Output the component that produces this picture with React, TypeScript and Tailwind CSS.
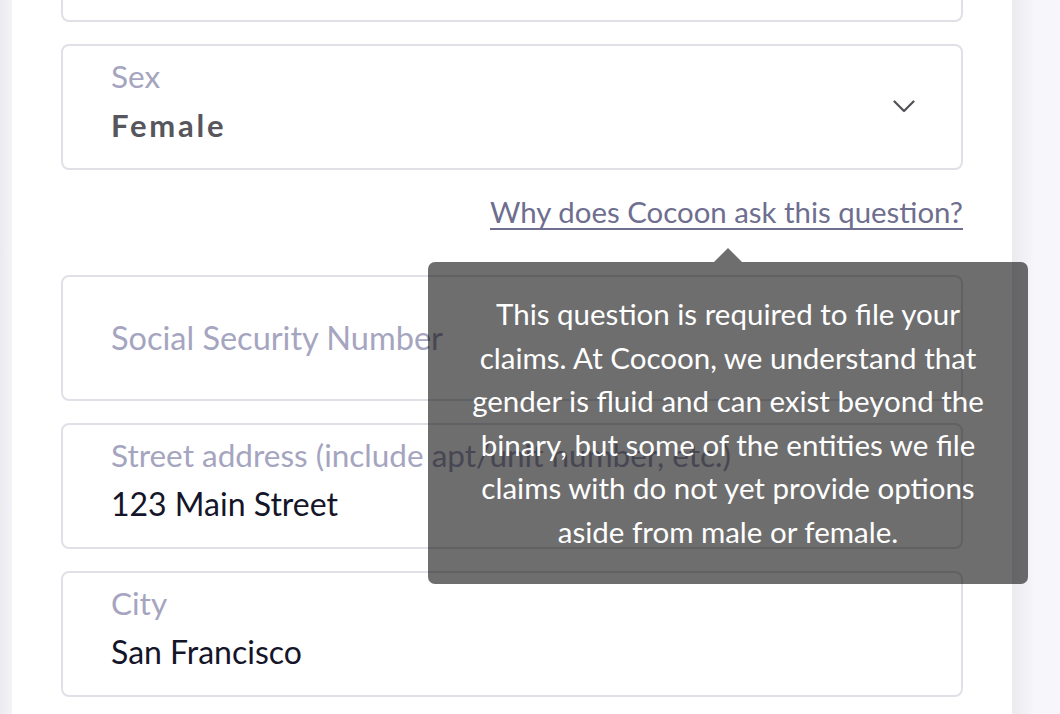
import React from 'react';

const font = { fontFamily: 'Lato, "Noto Sans", sans-serif' };

interface FieldProps {
  label?: string;
  value?: string;
  placeholder?: string;
  select?: boolean;
  className?: string;
}

const Field: React.FC<FieldProps> = ({ label, value, placeholder, select, className = '' }) => {
  if (placeholder !== undefined) {
    return (
      <div className={`h-[126px] rounded-[8px] border-2 border-[#e0e1e7] bg-white px-[48px] flex items-center ${className}`}>
        <span className="text-[32.5px] leading-[36px] text-[#a5a5c0]">{placeholder}</span>
      </div>
    );
  }

  return (
    <div className={`h-[126px] rounded-[8px] border-2 border-[#e0e1e7] bg-white pl-[48px] pr-[46px] pt-[12px] flex ${className}`}>
      <div className="flex-1 flex flex-col whitespace-nowrap">
        <span className="text-[31.5px] leading-[36px] text-[#a5a5c0]">{label}</span>
        {select ? (
          <span className="mt-[13px] text-[31px] leading-[36px] font-bold tracking-[2.8px] text-[#56565c]">{value}</span>
        ) : (
          <span className="mt-[13px] text-[32px] leading-[36px] text-[#15152a]">{value}</span>
        )}
      </div>
      {select && (
        <svg width="22" height="13" viewBox="0 0 22 13" className="mt-[42px]" fill="none">
          <polyline points="1.5,1.5 11,11 20.5,1.5" stroke="#505056" strokeWidth="2.2" strokeLinecap="round" strokeLinejoin="round" />
        </svg>
      )}
    </div>
  );
};

export default function App() {
  return (
    <div className="relative w-[1060px] h-[714px] overflow-hidden flex bg-[#f6f6fa]" style={font}>
      <div className="w-[12px] h-full bg-[linear-gradient(to_right,#eaeaf0,#f3f3f8)]" />

      <div className="w-[1000px] h-full bg-white px-[49px]">
        {/* previous field, scrolled mostly out of view */}
        <div className="-mt-[104px] h-[126px] rounded-[8px] border-2 border-[#e0e1e7] bg-white" />
        <Field label="Sex" value="Female" select className="mt-[22px]" />

        <div className="mt-[24px] flex justify-end">
          <a href="#" className="text-[29.4px] leading-[36px] text-[#6e6e8f] underline decoration-[1.5px] underline-offset-[5px] whitespace-nowrap">
            Why does Cocoon ask this question?
          </a>
        </div>

        <Field placeholder="Social Security Number" className="mt-[45px]" />
        <Field label="Street address (include apt/unit number, etc.)" value="123 Main Street" className="mt-[22px]" />
        <Field label="City" value="San Francisco" className="mt-[22px]" />
      </div>

      <div className="flex-1 h-full bg-[linear-gradient(to_right,#eaeaef,#f7f7fb_24px)]" />

      {/* tooltip */}
      <div className="absolute left-[428px] top-[262px] w-[600px] h-[322px] rounded-[7px] bg-black/[0.57] py-[30px] text-center text-white text-[29.5px] leading-[43.5px] whitespace-nowrap">
        <div className="absolute -top-[14px] left-[286px] w-0 h-0 border-l-[14px] border-r-[14px] border-b-[14px] border-l-transparent border-r-transparent border-b-black/[0.57]" />
        This question is required to file your<br />
        claims. At Cocoon, we understand that<br />
        gender is fluid and can exist beyond the<br />
        binary, but some of the entities we file<br />
        claims with do not yet provide options<br />
        aside from male or female.
      </div>
    </div>
  );
}
